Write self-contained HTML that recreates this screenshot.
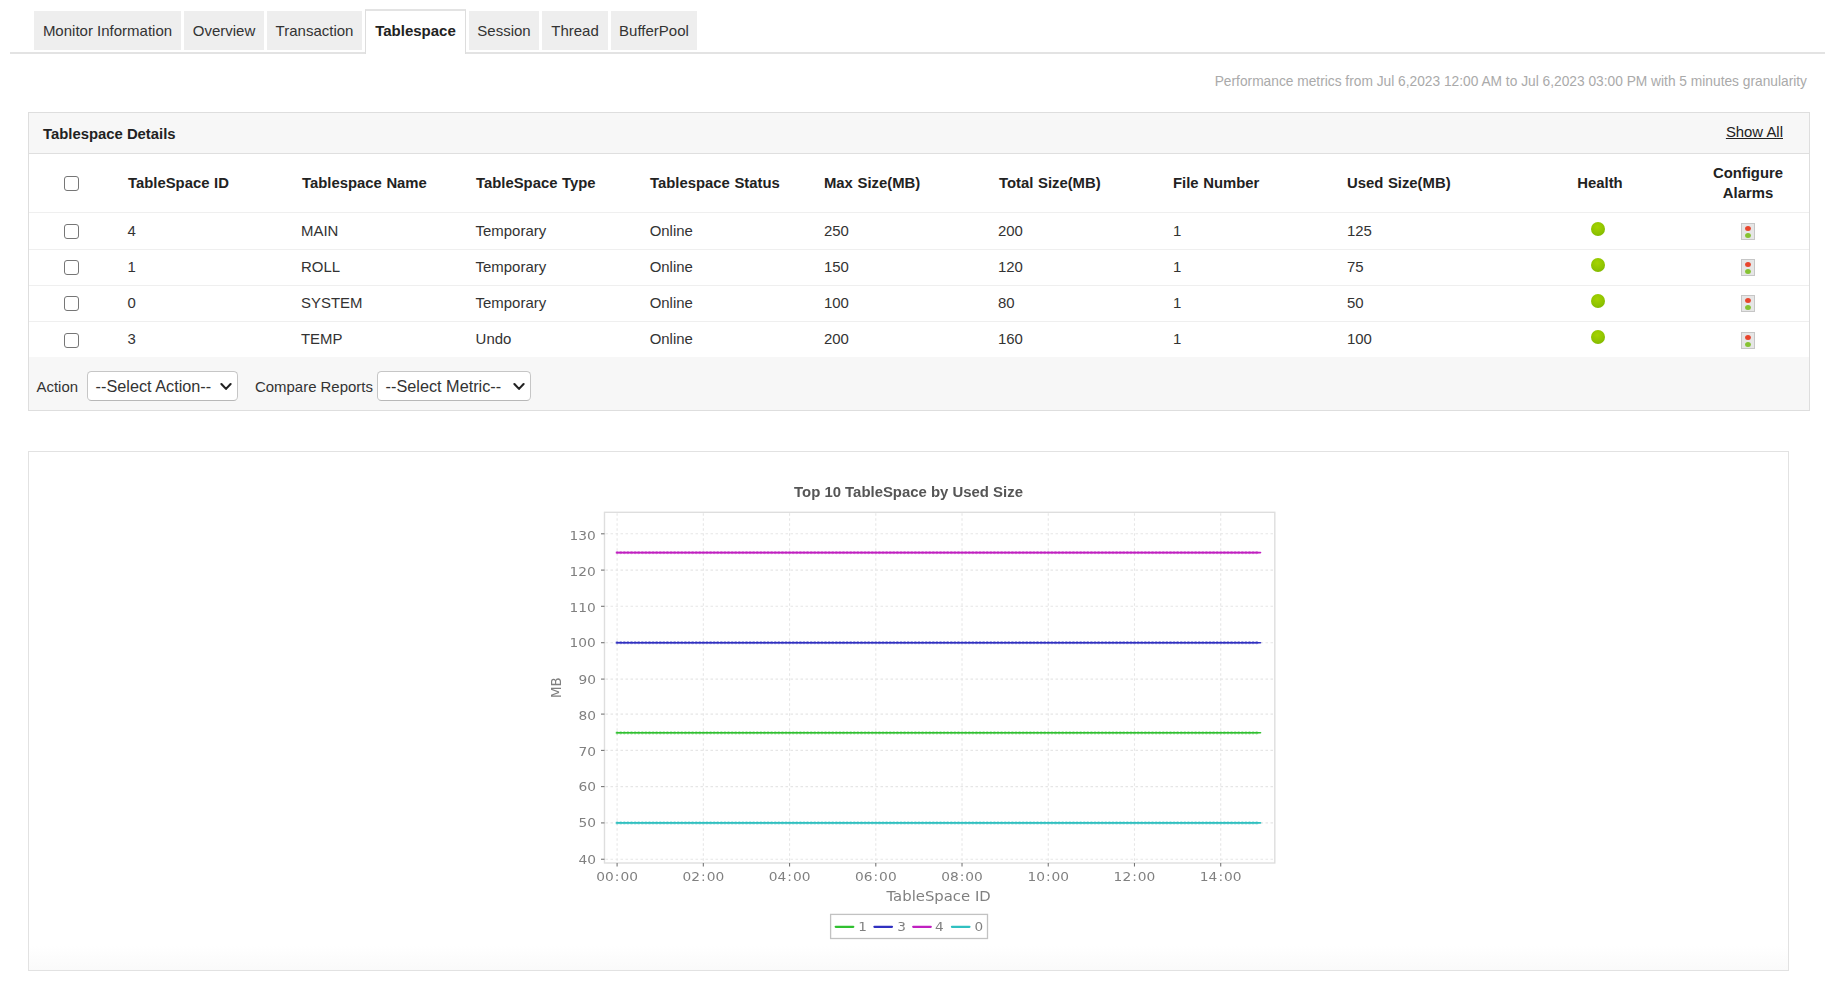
<!DOCTYPE html><html><head><meta charset="utf-8"><title>Tablespace</title><style>
*{box-sizing:border-box}
html,body{margin:0;padding:0;background:#fff}
body{width:1837px;height:981px;position:relative;overflow:hidden;font-family:"Liberation Sans",Arial,sans-serif;color:#333;font-size:14px}
.abs{position:absolute}
.tabline{left:10px;top:52px;width:1815px;height:2px;background:#e3e3e3}
.tab{position:absolute;top:11px;height:39px;background:#eee;color:#333;font-size:15px;line-height:39px;text-align:center;white-space:nowrap}
.tab.active{top:9px;height:45px;background:#fff;border:1px solid #ddd;border-top:2px solid #e3e3e3;border-bottom:0;font-weight:bold;color:#222;line-height:40px}
.perf{right:30px;top:73px;font-size:13.75px;color:#aaa;white-space:nowrap;line-height:18px}
.box{left:28px;top:112px;width:1782px;height:299px;border:1px solid #dedede;background:#fff}
.boxhead{left:0;top:0;width:1780px;height:41px;background:#f7f7f7;border-bottom:1px solid #dfdfdf}
.boxtitle{left:14px;top:12px;font-weight:bold;font-size:14.85px;line-height:18px;color:#222}
.showall{right:26px;top:10px;font-size:14.9px;line-height:18px;text-decoration:underline;color:#222}
.th{position:absolute;font-weight:bold;font-size:14.85px;line-height:20px;color:#222;white-space:nowrap;word-spacing:0.5px}
.td{position:absolute;font-size:14.95px;line-height:20px;color:#333;white-space:nowrap}
.rowline{position:absolute;left:0;width:1780px;height:1px;background:#efefef}
.cb{position:absolute;width:15px;height:15px;border:1.5px solid #767676;border-radius:3px;background:#fff}
.dot{position:absolute;width:14px;height:14px;border-radius:50%;background:radial-gradient(circle at 45% 35%,#a5d300 0%,#8fc400 55%,#74ad00 100%)}
.foot{left:0;top:244px;width:1780px;height:53px;background:#f7f7f7}
.sel{position:absolute;height:30px;border:1px solid #c6c6c6;border-bottom-color:#b8b8b8;border-radius:4.5px;background:#fff;font-size:16.25px;line-height:28px;color:#333;padding-left:7.6px;white-space:nowrap}
.lbl{position:absolute;font-size:14.95px;line-height:20px;color:#333;white-space:nowrap}
.panel{left:28px;top:451px;width:1761px;height:520px;border:1px solid #e2e2e2;background:linear-gradient(to bottom,#fff 0,#fff 494px,#fafafa 518px)}
</style></head><body>
<div class="abs tabline"></div>
<div class="tab" style="left:34px;width:147px">Monitor Information</div>
<div class="tab" style="left:184px;width:80px">Overview</div>
<div class="tab" style="left:267px;width:95px">Transaction</div>
<div class="tab active" style="left:365px;width:101px">Tablespace</div>
<div class="tab" style="left:469px;width:70px">Session</div>
<div class="tab" style="left:542px;width:66px">Thread</div>
<div class="tab" style="left:611px;width:86px">BufferPool</div>
<div class="abs perf">Performance metrics from Jul 6,2023 12:00 AM to Jul 6,2023 03:00 PM with 5 minutes granularity</div>
<div class="abs box">
<div class="abs boxhead"></div><div class="abs boxtitle">Tablespace Details</div><div class="abs showall">Show All</div>
<div class="cb" style="left:35px;top:63px"></div>
<div class="th" style="left:99px;top:60px">TableSpace ID</div>
<div class="th" style="left:273px;top:60px">Tablespace Name</div>
<div class="th" style="left:447px;top:60px">TableSpace Type</div>
<div class="th" style="left:621px;top:60px">Tablespace Status</div>
<div class="th" style="left:795px;top:60px">Max Size(MB)</div>
<div class="th" style="left:970px;top:60px">Total Size(MB)</div>
<div class="th" style="left:1144px;top:60px">File Number</div>
<div class="th" style="left:1318px;top:60px">Used Size(MB)</div>
<div class="th" style="left:1511px;width:120px;text-align:center;top:60px">Health</div>
<div class="th" style="left:1659px;width:120px;text-align:center;top:50px">Configure<br>Alarms</div>
<div class="rowline" style="top:99px"></div>
<div class="cb" style="left:35px;top:111px"></div>
<div class="td" style="left:98.4px;top:108.3px">4</div>
<div class="td" style="left:272px;top:108.3px">MAIN</div>
<div class="td" style="left:446.6px;top:108.3px">Temporary</div>
<div class="td" style="left:620.7px;top:108.3px">Online</div>
<div class="td" style="left:795px;top:108.3px">250</div>
<div class="td" style="left:969px;top:108.3px">200</div>
<div class="td" style="left:1144px;top:108.3px">1</div>
<div class="td" style="left:1318px;top:108.3px">125</div>
<div class="dot" style="left:1562px;top:109px"></div>
<svg class="abs" style="left:1712px;top:110px" width="14" height="17" viewBox="0 0 14 17"><rect x="0.5" y="0.5" width="13" height="16" fill="#e6e6e6" stroke="#c6c6c6"/><ellipse cx="7" cy="5.5" rx="2.9" ry="2.5" fill="#e8452c"/><ellipse cx="7" cy="12.5" rx="2.9" ry="2.5" fill="#86c232"/></svg>
<div class="rowline" style="top:136px"></div>
<div class="cb" style="left:35px;top:147px"></div>
<div class="td" style="left:98.4px;top:143.9px">1</div>
<div class="td" style="left:272px;top:143.9px">ROLL</div>
<div class="td" style="left:446.6px;top:143.9px">Temporary</div>
<div class="td" style="left:620.7px;top:143.9px">Online</div>
<div class="td" style="left:795px;top:143.9px">150</div>
<div class="td" style="left:969px;top:143.9px">120</div>
<div class="td" style="left:1144px;top:143.9px">1</div>
<div class="td" style="left:1318px;top:143.9px">75</div>
<div class="dot" style="left:1562px;top:145px"></div>
<svg class="abs" style="left:1712px;top:146px" width="14" height="17" viewBox="0 0 14 17"><rect x="0.5" y="0.5" width="13" height="16" fill="#e6e6e6" stroke="#c6c6c6"/><ellipse cx="7" cy="5.5" rx="2.9" ry="2.5" fill="#e8452c"/><ellipse cx="7" cy="12.5" rx="2.9" ry="2.5" fill="#86c232"/></svg>
<div class="rowline" style="top:172px"></div>
<div class="cb" style="left:35px;top:183px"></div>
<div class="td" style="left:98.4px;top:180.0px">0</div>
<div class="td" style="left:272px;top:180.0px">SYSTEM</div>
<div class="td" style="left:446.6px;top:180.0px">Temporary</div>
<div class="td" style="left:620.7px;top:180.0px">Online</div>
<div class="td" style="left:795px;top:180.0px">100</div>
<div class="td" style="left:969px;top:180.0px">80</div>
<div class="td" style="left:1144px;top:180.0px">1</div>
<div class="td" style="left:1318px;top:180.0px">50</div>
<div class="dot" style="left:1562px;top:181px"></div>
<svg class="abs" style="left:1712px;top:182px" width="14" height="17" viewBox="0 0 14 17"><rect x="0.5" y="0.5" width="13" height="16" fill="#e6e6e6" stroke="#c6c6c6"/><ellipse cx="7" cy="5.5" rx="2.9" ry="2.5" fill="#e8452c"/><ellipse cx="7" cy="12.5" rx="2.9" ry="2.5" fill="#86c232"/></svg>
<div class="rowline" style="top:208px"></div>
<div class="cb" style="left:35px;top:220px"></div>
<div class="td" style="left:98.4px;top:215.8px">3</div>
<div class="td" style="left:272px;top:215.8px">TEMP</div>
<div class="td" style="left:446.6px;top:215.8px">Undo</div>
<div class="td" style="left:620.7px;top:215.8px">Online</div>
<div class="td" style="left:795px;top:215.8px">200</div>
<div class="td" style="left:969px;top:215.8px">160</div>
<div class="td" style="left:1144px;top:215.8px">1</div>
<div class="td" style="left:1318px;top:215.8px">100</div>
<div class="dot" style="left:1562px;top:217px"></div>
<svg class="abs" style="left:1712px;top:219px" width="14" height="17" viewBox="0 0 14 17"><rect x="0.5" y="0.5" width="13" height="16" fill="#e6e6e6" stroke="#c6c6c6"/><ellipse cx="7" cy="5.5" rx="2.9" ry="2.5" fill="#e8452c"/><ellipse cx="7" cy="12.5" rx="2.9" ry="2.5" fill="#86c232"/></svg>
<div class="abs foot"></div>
<div class="lbl" style="left:7.5px;top:264px">Action</div>
<div class="sel" style="left:58px;top:258px;width:151px">--Select Action--<svg style="position:absolute;right:5px;top:10px" width="12" height="9" viewBox="0 0 12 9"><path d="M1.4 2 L6 6.9 L10.6 2" fill="none" stroke="#222" stroke-width="2.1" stroke-linecap="round" stroke-linejoin="round"/></svg></div>
<div class="lbl" style="left:226px;top:264px">Compare Reports</div>
<div class="sel" style="left:348px;top:258px;width:154px">--Select Metric--<svg style="position:absolute;right:5px;top:10px" width="12" height="9" viewBox="0 0 12 9"><path d="M1.4 2 L6 6.9 L10.6 2" fill="none" stroke="#222" stroke-width="2.1" stroke-linecap="round" stroke-linejoin="round"/></svg></div>
</div>
<div class="abs panel"></div>
<svg class="abs" style="left:520px;top:470px;will-change:transform" width="800" height="490" viewBox="520 470 800 490">
<text x="908.5" y="497" text-anchor="middle" font-family="Liberation Sans,Arial,sans-serif" font-weight="bold" font-size="14.92" fill="#555">Top 10 TableSpace by Used Size</text>
<rect x="604.5" y="512.3" width="670.3" height="350.70000000000005" fill="#fff" stroke="#dedede" stroke-width="1.4"/>
<line x1="605.5" x2="1273.8" y1="859.25" y2="859.25" stroke="#e6e6e6" stroke-width="1.1" stroke-dasharray="2.5 2.5"/>
<line x1="601.0" x2="604.5" y1="859.25" y2="859.25" stroke="#777" stroke-width="1.1"/>
<text transform="translate(595.90,863.55) scale(1.13,1)" text-anchor="end" font-family="DejaVu Sans,Verdana,sans-serif" font-size="12.2" fill="#808080" >40</text>
<line x1="605.5" x2="1273.8" y1="822.90" y2="822.90" stroke="#e6e6e6" stroke-width="1.1" stroke-dasharray="2.5 2.5"/>
<line x1="601.0" x2="604.5" y1="822.90" y2="822.90" stroke="#777" stroke-width="1.1"/>
<text transform="translate(595.90,827.25) scale(1.13,1)" text-anchor="end" font-family="DejaVu Sans,Verdana,sans-serif" font-size="12.2" fill="#808080" >50</text>
<line x1="605.5" x2="1273.8" y1="786.60" y2="786.60" stroke="#e6e6e6" stroke-width="1.1" stroke-dasharray="2.5 2.5"/>
<line x1="601.0" x2="604.5" y1="786.60" y2="786.60" stroke="#777" stroke-width="1.1"/>
<text transform="translate(595.90,791.15) scale(1.13,1)" text-anchor="end" font-family="DejaVu Sans,Verdana,sans-serif" font-size="12.2" fill="#808080" >60</text>
<line x1="605.5" x2="1273.8" y1="750.40" y2="750.40" stroke="#e6e6e6" stroke-width="1.1" stroke-dasharray="2.5 2.5"/>
<line x1="601.0" x2="604.5" y1="750.40" y2="750.40" stroke="#777" stroke-width="1.1"/>
<text transform="translate(595.90,756.05) scale(1.13,1)" text-anchor="end" font-family="DejaVu Sans,Verdana,sans-serif" font-size="12.2" fill="#808080" >70</text>
<line x1="605.5" x2="1273.8" y1="714.10" y2="714.10" stroke="#e6e6e6" stroke-width="1.1" stroke-dasharray="2.5 2.5"/>
<line x1="601.0" x2="604.5" y1="714.10" y2="714.10" stroke="#777" stroke-width="1.1"/>
<text transform="translate(595.90,719.85) scale(1.13,1)" text-anchor="end" font-family="DejaVu Sans,Verdana,sans-serif" font-size="12.2" fill="#808080" >80</text>
<line x1="605.5" x2="1273.8" y1="679.10" y2="679.10" stroke="#e6e6e6" stroke-width="1.1" stroke-dasharray="2.5 2.5"/>
<line x1="601.0" x2="604.5" y1="679.10" y2="679.10" stroke="#777" stroke-width="1.1"/>
<text transform="translate(595.90,683.55) scale(1.13,1)" text-anchor="end" font-family="DejaVu Sans,Verdana,sans-serif" font-size="12.2" fill="#808080" >90</text>
<line x1="605.5" x2="1273.8" y1="642.70" y2="642.70" stroke="#e6e6e6" stroke-width="1.1" stroke-dasharray="2.5 2.5"/>
<line x1="601.0" x2="604.5" y1="642.70" y2="642.70" stroke="#777" stroke-width="1.1"/>
<text transform="translate(595.90,647.25) scale(1.13,1)" text-anchor="end" font-family="DejaVu Sans,Verdana,sans-serif" font-size="12.2" fill="#808080" >100</text>
<line x1="605.5" x2="1273.8" y1="606.30" y2="606.30" stroke="#e6e6e6" stroke-width="1.1" stroke-dasharray="2.5 2.5"/>
<line x1="601.0" x2="604.5" y1="606.30" y2="606.30" stroke="#777" stroke-width="1.1"/>
<text transform="translate(595.90,612.25) scale(1.13,1)" text-anchor="end" font-family="DejaVu Sans,Verdana,sans-serif" font-size="12.2" fill="#808080" >110</text>
<line x1="605.5" x2="1273.8" y1="570.10" y2="570.10" stroke="#e6e6e6" stroke-width="1.1" stroke-dasharray="2.5 2.5"/>
<line x1="601.0" x2="604.5" y1="570.10" y2="570.10" stroke="#777" stroke-width="1.1"/>
<text transform="translate(595.90,576.05) scale(1.13,1)" text-anchor="end" font-family="DejaVu Sans,Verdana,sans-serif" font-size="12.2" fill="#808080" >120</text>
<line x1="605.5" x2="1273.8" y1="533.80" y2="533.80" stroke="#e6e6e6" stroke-width="1.1" stroke-dasharray="2.5 2.5"/>
<line x1="601.0" x2="604.5" y1="533.80" y2="533.80" stroke="#777" stroke-width="1.1"/>
<text transform="translate(595.90,539.85) scale(1.13,1)" text-anchor="end" font-family="DejaVu Sans,Verdana,sans-serif" font-size="12.2" fill="#808080" >130</text>
<line x1="617.10" x2="617.10" y1="513.3" y2="862.0" stroke="#e6e6e6" stroke-width="1.1" stroke-dasharray="2.5 2.5"/>
<line x1="617.10" x2="617.10" y1="863.0" y2="866.5" stroke="#777" stroke-width="1.1"/>
<text transform="translate(617.10,881.20) scale(1.13,1)" text-anchor="middle" font-family="DejaVu Sans,Verdana,sans-serif" font-size="12.2" fill="#808080" dx="0 0 0.9 0.9 0">00:00</text>
<line x1="703.33" x2="703.33" y1="513.3" y2="862.0" stroke="#e6e6e6" stroke-width="1.1" stroke-dasharray="2.5 2.5"/>
<line x1="703.33" x2="703.33" y1="863.0" y2="866.5" stroke="#777" stroke-width="1.1"/>
<text transform="translate(703.33,881.20) scale(1.13,1)" text-anchor="middle" font-family="DejaVu Sans,Verdana,sans-serif" font-size="12.2" fill="#808080" dx="0 0 0.9 0.9 0">02:00</text>
<line x1="789.56" x2="789.56" y1="513.3" y2="862.0" stroke="#e6e6e6" stroke-width="1.1" stroke-dasharray="2.5 2.5"/>
<line x1="789.56" x2="789.56" y1="863.0" y2="866.5" stroke="#777" stroke-width="1.1"/>
<text transform="translate(789.56,881.20) scale(1.13,1)" text-anchor="middle" font-family="DejaVu Sans,Verdana,sans-serif" font-size="12.2" fill="#808080" dx="0 0 0.9 0.9 0">04:00</text>
<line x1="875.79" x2="875.79" y1="513.3" y2="862.0" stroke="#e6e6e6" stroke-width="1.1" stroke-dasharray="2.5 2.5"/>
<line x1="875.79" x2="875.79" y1="863.0" y2="866.5" stroke="#777" stroke-width="1.1"/>
<text transform="translate(875.79,881.20) scale(1.13,1)" text-anchor="middle" font-family="DejaVu Sans,Verdana,sans-serif" font-size="12.2" fill="#808080" dx="0 0 0.9 0.9 0">06:00</text>
<line x1="962.02" x2="962.02" y1="513.3" y2="862.0" stroke="#e6e6e6" stroke-width="1.1" stroke-dasharray="2.5 2.5"/>
<line x1="962.02" x2="962.02" y1="863.0" y2="866.5" stroke="#777" stroke-width="1.1"/>
<text transform="translate(962.02,881.20) scale(1.13,1)" text-anchor="middle" font-family="DejaVu Sans,Verdana,sans-serif" font-size="12.2" fill="#808080" dx="0 0 0.9 0.9 0">08:00</text>
<line x1="1048.25" x2="1048.25" y1="513.3" y2="862.0" stroke="#e6e6e6" stroke-width="1.1" stroke-dasharray="2.5 2.5"/>
<line x1="1048.25" x2="1048.25" y1="863.0" y2="866.5" stroke="#777" stroke-width="1.1"/>
<text transform="translate(1048.25,881.20) scale(1.13,1)" text-anchor="middle" font-family="DejaVu Sans,Verdana,sans-serif" font-size="12.2" fill="#808080" dx="0 0 0.9 0.9 0">10:00</text>
<line x1="1134.48" x2="1134.48" y1="513.3" y2="862.0" stroke="#e6e6e6" stroke-width="1.1" stroke-dasharray="2.5 2.5"/>
<line x1="1134.48" x2="1134.48" y1="863.0" y2="866.5" stroke="#777" stroke-width="1.1"/>
<text transform="translate(1134.48,881.20) scale(1.13,1)" text-anchor="middle" font-family="DejaVu Sans,Verdana,sans-serif" font-size="12.2" fill="#808080" dx="0 0 0.9 0.9 0">12:00</text>
<line x1="1220.71" x2="1220.71" y1="513.3" y2="862.0" stroke="#e6e6e6" stroke-width="1.1" stroke-dasharray="2.5 2.5"/>
<line x1="1220.71" x2="1220.71" y1="863.0" y2="866.5" stroke="#777" stroke-width="1.1"/>
<text transform="translate(1220.71,881.20) scale(1.13,1)" text-anchor="middle" font-family="DejaVu Sans,Verdana,sans-serif" font-size="12.2" fill="#808080" dx="0 0 0.9 0.9 0">14:00</text>
<text transform="translate(938.60,901.00) scale(1.11,1)" text-anchor="middle" font-family="DejaVu Sans,Verdana,sans-serif" font-size="13.4" fill="#808080" >TableSpace ID</text>
<text transform="translate(561.4,687.7) rotate(-90) scale(1,1.03)" text-anchor="middle" font-family="DejaVu Sans,Verdana,sans-serif" font-size="13.4" fill="#808080">MB</text>
<line x1="616.80" x2="1260.53" y1="552.60" y2="552.60" stroke="#c020c0" stroke-width="1.6" stroke-linecap="round"/>
<line x1="617.10" x2="1260.23" y1="552.60" y2="552.60" stroke="#c020c0" stroke-opacity="0.5" stroke-width="3.3" stroke-linecap="round" stroke-dasharray="0.1 3.493"/>
<line x1="616.80" x2="1260.53" y1="642.70" y2="642.70" stroke="#3030c0" stroke-width="1.6" stroke-linecap="round"/>
<line x1="617.10" x2="1260.23" y1="642.70" y2="642.70" stroke="#3030c0" stroke-opacity="0.5" stroke-width="3.3" stroke-linecap="round" stroke-dasharray="0.1 3.493"/>
<line x1="616.80" x2="1260.53" y1="732.80" y2="732.80" stroke="#30c030" stroke-width="1.6" stroke-linecap="round"/>
<line x1="617.10" x2="1260.23" y1="732.80" y2="732.80" stroke="#30c030" stroke-opacity="0.5" stroke-width="3.3" stroke-linecap="round" stroke-dasharray="0.1 3.493"/>
<line x1="616.80" x2="1260.53" y1="822.90" y2="822.90" stroke="#30c0c0" stroke-width="1.6" stroke-linecap="round"/>
<line x1="617.10" x2="1260.23" y1="822.90" y2="822.90" stroke="#30c0c0" stroke-opacity="0.5" stroke-width="3.3" stroke-linecap="round" stroke-dasharray="0.1 3.493"/>
<rect x="830.6" y="914.4" width="156.9" height="24.1" fill="#fff" stroke="#c2c2c2" stroke-width="1.3"/>
<line x1="835.7" x2="853.3000000000001" y1="926.8" y2="926.8" stroke="#30c030" stroke-width="2.2" stroke-linecap="round"/>
<text transform="translate(858.20,931.00) scale(1.08,1)" text-anchor="start" font-family="DejaVu Sans,Verdana,sans-serif" font-size="12.6" fill="#808080" >1</text>
<line x1="874.4" x2="892.0" y1="926.8" y2="926.8" stroke="#3030c0" stroke-width="2.2" stroke-linecap="round"/>
<text transform="translate(897.20,931.00) scale(1.08,1)" text-anchor="start" font-family="DejaVu Sans,Verdana,sans-serif" font-size="12.6" fill="#808080" >3</text>
<line x1="913.2" x2="930.8000000000001" y1="926.8" y2="926.8" stroke="#c020c0" stroke-width="2.2" stroke-linecap="round"/>
<text transform="translate(934.90,931.00) scale(1.08,1)" text-anchor="start" font-family="DejaVu Sans,Verdana,sans-serif" font-size="12.6" fill="#808080" >4</text>
<line x1="951.9" x2="969.5" y1="926.8" y2="926.8" stroke="#30c0c0" stroke-width="2.2" stroke-linecap="round"/>
<text transform="translate(974.50,931.00) scale(1.08,1)" text-anchor="start" font-family="DejaVu Sans,Verdana,sans-serif" font-size="12.6" fill="#808080" >0</text>
</svg>
</body></html>
